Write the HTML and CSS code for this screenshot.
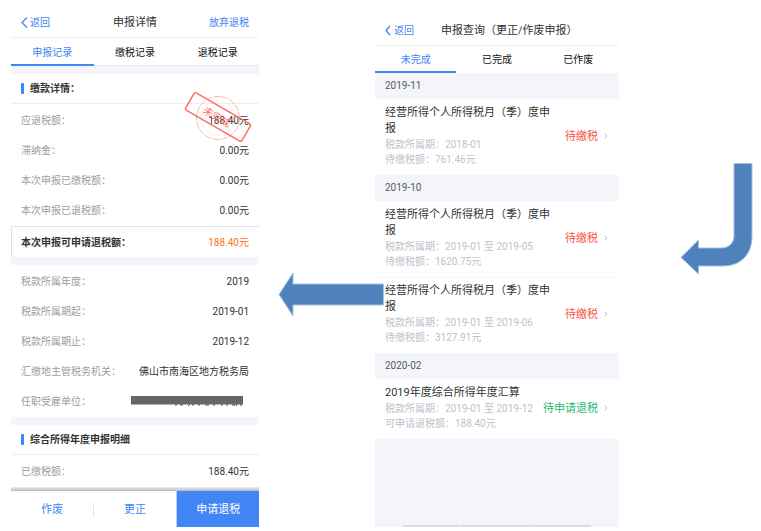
FILE: index.html
```
<!DOCTYPE html>
<html lang="zh-CN">
<head>
    <meta charset="UTF-8">
    <title>申报详情</title>
    <link rel="stylesheet" href="styles.css">
</head>
<body>

<div class="flow">
    <!-- 申报详情 -->
    <section class="screen detail">
        <header class="topbar">
            <a class="back" href="#"><svg width="7" height="11" viewBox="0 0 7 11"><path d="M6 0.500L1 5.500L6 10.500"/></svg>返回</a>
            <h1>申报详情</h1>
            <a class="topbar-link" href="#">放弃退税</a>
        </header>
        <nav class="tabs">
            <button class="tab active" type="button">申报记录</button>
            <button class="tab" type="button">缴税记录</button>
            <button class="tab" type="button">退税记录</button>
        </nav>
        <div class="spacer"></div>

        <h2 class="block-title">缴款详情：</h2>
        <dl class="rows">
            <div class="row"><dt>应退税额：</dt><dd>188.40元</dd></div>
            <div class="row"><dt>滞纳金：</dt><dd>0.00元</dd></div>
            <div class="row"><dt>本次申报已缴税额：</dt><dd>0.00元</dd></div>
            <div class="row"><dt>本次申报已退税额：</dt><dd>0.00元</dd></div>
            <svg class="stamp" width="72" height="56" viewBox="0 0 72 56">
                <circle cx="36" cy="29" r="21.5" stroke-dasharray="7 1"/>
                <circle class="inner" cx="36" cy="29" r="17" stroke-dasharray="3 3"/>
                <g transform="rotate(30 36 28)">
                    <rect x="3.5" y="18" width="65" height="20" rx="2"/>
                    <text x="35" y="32" text-anchor="middle">未完成</text>
                </g>
            </svg>
        </dl>
        <dl class="total">
            <div class="row"><dt>本次申报可申请退税额：</dt><dd>188.40元</dd></div>
        </dl>
        <div class="spacer"></div>

        <dl class="rows">
            <div class="row"><dt>税款所属年度：</dt><dd>2019</dd></div>
            <div class="row"><dt>税款所属期起：</dt><dd>2019-01</dd></div>
            <div class="row"><dt>税款所属期止：</dt><dd>2019-12</dd></div>
            <div class="row"><dt>汇缴地主管税务机关：</dt><dd>佛山市南海区地方税务局</dd></div>
            <div class="row">
                <dt>任职受雇单位：</dt>
                <dd>
                    <svg class="mask" width="113" height="10" viewBox="0 0 113 10">
                        <path fill="#666" d="M0 0H112V8.500H0Z"/>
                        <path stroke="#444" d="M45 8v2M49 9h3M59 8l-2 2M62 8v2M68 8v2M74 9h4M83 8v2M92 8l-2 2M96 8v2M101 9h3M106 8l-1 2M110 8v2"/>
                    </svg>
                </dd>
            </div>
        </dl>
        <div class="spacer"></div>

        <h2 class="block-title">综合所得年度申报明细</h2>
        <dl class="rows">
            <div class="row"><dt>已缴税额：</dt><dd>188.40元</dd></div>
        </dl>

        <footer class="actions">
            <button type="button">作废</button>
            <button type="button">更正</button>
            <button class="primary" type="button">申请退税</button>
        </footer>
    </section>

    <div class="arrow arrow-left">
        <svg width="106" height="46" viewBox="0 0 106 46">
            <path d="M1 22.500L15 1V12H105.500V33H15V44Z"/>
        </svg>
    </div>

    <!-- 申报查询 -->
    <section class="screen list">
        <header class="topbar">
            <a class="back" href="#"><svg width="7" height="11" viewBox="0 0 7 11"><path d="M5 1L1 5.500L5 10"/></svg>返回</a>
            <h1>申报查询（更正/作废申报）</h1>
        </header>
        <nav class="tabs">
            <button class="tab active" type="button">未完成</button>
            <button class="tab" type="button">已完成</button>
            <button class="tab" type="button">已作废</button>
        </nav>

        <h2 class="month">2019-11</h2>
        <a class="item" href="#">
            <div class="item-text">
                <h3>经营所得个人所得税月（季）度申报</h3>
                <p>税款所属期：2018-01</p>
                <p>待缴税额：761.46元</p>
            </div>
            <span class="status">待缴税</span>
            <svg class="chevron" width="4" height="6" viewBox="0 0 4 6"><path d="M0.500 0.500L3 3L0.500 5.500"/></svg>
        </a>

        <h2 class="month">2019-10</h2>
        <a class="item" href="#">
            <div class="item-text">
                <h3>经营所得个人所得税月（季）度申报</h3>
                <p>税款所属期：2019-01 至 2019-05</p>
                <p>待缴税额：1620.75元</p>
            </div>
            <span class="status">待缴税</span>
            <svg class="chevron" width="4" height="6" viewBox="0 0 4 6"><path d="M0.500 0.500L3 3L0.500 5.500"/></svg>
        </a>
        <a class="item" href="#">
            <div class="item-text">
                <h3>经营所得个人所得税月（季）度申报</h3>
                <p>税款所属期：2019-01 至 2019-06</p>
                <p>待缴税额：3127.91元</p>
            </div>
            <span class="status">待缴税</span>
            <svg class="chevron" width="4" height="6" viewBox="0 0 4 6"><path d="M0.500 0.500L3 3L0.500 5.500"/></svg>
        </a>

        <h2 class="month">2020-02</h2>
        <a class="item" href="#">
            <div class="item-text">
                <h3>2019年度综合所得年度汇算</h3>
                <p>税款所属期：2019-01 至 2019-12</p>
                <p>可申请退税额：188.40元</p>
            </div>
            <span class="status refund">待申请退税</span>
            <svg class="chevron" width="4" height="6" viewBox="0 0 4 6"><path d="M0.500 0.500L3 3L0.500 5.500"/></svg>
        </a>

        <div class="rest"><i></i><i></i><i></i></div>
    </section>

    <div class="arrow arrow-down">
        <svg width="73" height="114" viewBox="0 0 73 114">
            <path d="M54 1.500H72V75C72 92 61 104 43 104H18.500V112L1 95.500L18.500 78V86H41C49 86 54 81 54 74Z"/>
        </svg>
    </div>
</div>

</body>
</html>
```
FILE: styles.css
```
* { box-sizing: border-box; }
body { margin: 0; background: #fff; color: #333; font-family: Roboto, "Noto Sans CJK SC", sans-serif; font-size: 10px; line-height: 15px; }
h1, h2, h3, p, dl, dd { margin: 0; font-size: inherit; font-weight: normal; }
a { color: inherit; text-decoration: none; }
button { padding: 0; border: none; background: none; color: inherit; font: inherit; cursor: pointer; }
svg { display: block; fill: none; }

.flow {
    display: grid;
    grid-template-columns: 62fr 116px 61fr 133px;
    min-height: 531px;
    padding: 0 9px 4px 11px;
}
.screen { display: flex; flex-direction: column; min-width: 0; }
.detail { padding-top: 8px; }
.list { padding-top: 16px; }

/* header + tabs */
.topbar { display: grid; grid-template-columns: 1fr auto 1fr; align-items: center; height: 30px; padding: 0 10px; border-bottom: 1px solid #eee; }
.list .topbar { grid-template-columns: auto 1fr; gap: 27px; }
.topbar h1 { font-size: 11px; white-space: nowrap; }
.back { display: flex; align-items: center; gap: 2px; color: #4285f4; }
.back svg { stroke: #4285f4; stroke-width: 1.3; }
.topbar-link { justify-self: end; color: #4285f4; }
.tabs { display: grid; grid-template-columns: repeat(3, 1fr); height: 28px; box-shadow: inset 0 -1px #e4e6ea; }
.tab { color: #111; }
.tab.active { box-shadow: inset 0 -2px #4285f4; color: #4285f4; }

/* detail screen */
.spacer { height: 8px; background: #f4f5fa; }
.block-title { display: flex; align-items: center; gap: 6px; height: 30px; padding: 0 10px; border-bottom: 1px solid #eee; font-weight: bold; }
.block-title::before { content: ""; width: 3px; height: 11px; border-radius: 1px; background: #4285f4; }
.rows { position: relative; padding: 1px 0; }
.row { display: flex; justify-content: space-between; align-items: center; height: 30px; padding: 0 10px; white-space: nowrap; }
.row dt { color: #9b9da6; }
.total { border: 1px solid #e2e3e8; border-width: 1px 0 0 1px; }
.total .row { padding-left: 9px; }
.total dt { color: #333; font-weight: bold; }
.total dd { color: #ff7210; }
.mask { margin-right: 5px; }
.stamp { position: absolute; top: -15px; right: 5px; stroke: #fb7065; }
.stamp circle { opacity: 0.5; }
.stamp .inner { opacity: 0.25; }
.stamp rect { stroke-width: 1.5; }
.stamp text { fill: #fb7065; stroke: none; }

.actions { display: grid; grid-template-columns: repeat(3, 1fr); height: 40px; margin-top: auto; padding-top: 4px; background: linear-gradient(#f0f0f2, #b8b8bc) top / 100% 4px no-repeat; }
.actions button { color: #4285f4; font-size: 11px; }
.actions button:first-child { background: linear-gradient(#e6e6e6, #e6e6e6) right center / 1px 15px no-repeat; }
.actions .primary { border-left: 1px solid #b5cffb; background: #4285f4; color: #fff; }

/* list screen */
.month { height: 26px; padding: 0 10px; background: #f4f5fa; color: #555963; line-height: 26px; }
.list .tabs { height: 27px; box-shadow: none; }
.item { display: flex; align-items: center; padding: 6px 11px 8px 10px; }
.item + .item { box-shadow: inset 0 1px #f7f7f9; }
.item-text { flex: 1; min-width: 0; }
.item h3 { font-size: 11px; line-height: 16px; }
.item p { color: #bfc1cc; white-space: nowrap; }
.status { margin: 0 6px; color: #fa5343; font-size: 11px; white-space: nowrap; }
.status.refund { color: #28b873; }
.chevron { stroke: #b9bcc6; }
.rest { display: flex; flex: 1; align-items: flex-end; gap: 1px; padding: 0 28px; background: #f4f5fa; }
.rest i { flex: 4; height: 2px; background: #dcdde0; }
.rest i:nth-child(2) { flex: 5; }

/* arrows between the screens */
.arrow svg { fill: #4f81bd; stroke: #a7c1e0; }
.arrow-left { z-index: 1; padding: 272px 0 0 19px; }
.arrow-down { padding: 162px 0 0 61px; }
```
